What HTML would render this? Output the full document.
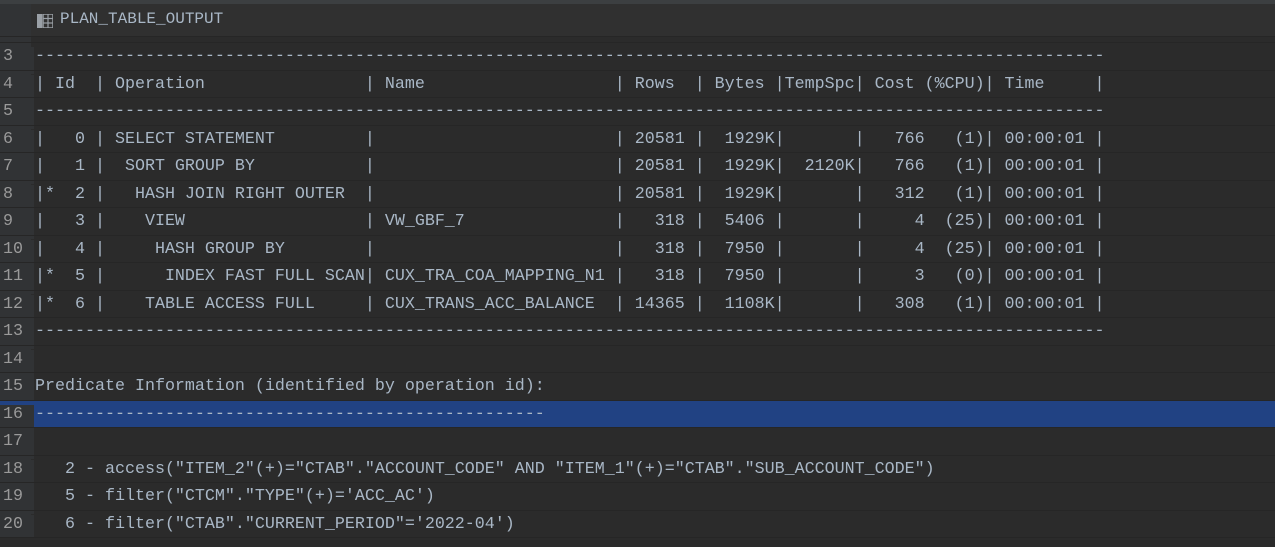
<!DOCTYPE html>
<html><head><meta charset="utf-8"><style>
html,body{margin:0;padding:0;background:#2b2b2b;width:1275px;height:547px;overflow:hidden}
body{position:relative;font-family:"Liberation Mono","DejaVu Sans Mono",monospace;font-size:16.67px;color:#a9b7c6}
.top{position:absolute;left:0;top:0;width:1275px;height:4px;background:#3c3f41}
.hdr{position:absolute;left:0;top:4px;width:1275px;height:32px;background:#303030;border-bottom:1px solid #262626}
.hdr .g{position:absolute;left:0;top:0;width:31px;height:32px;background:#313335}
.hdr .t{position:absolute;left:60px;top:6px;font-family:"Liberation Mono",monospace;font-size:16px;color:#a9b7c6}
.gut{position:absolute;left:0;top:37px;width:31px;height:510px;background:#313335}
.row{position:absolute;left:0;width:1275px;height:26.5px;border-top:1px solid #262626}
.row .n{position:absolute;left:0;width:31px;text-align:left;padding-left:3px;top:4px;color:#9a9a9a;background:#313335;height:27px}
.row pre{position:absolute;left:35px;top:4px;margin:0;font:inherit;white-space:pre;line-height:19px}
.sel{background:#214283}
.bot{position:absolute;left:0;top:537px;width:1275px;height:10px;background:#2b2b2b;border-top:1px solid #262626}
</style></head><body>
<div class="top"></div>
<div class="hdr"><div class="g"></div>
<svg style="position:absolute;left:37px;top:10px" width="16" height="14" viewBox="0 0 16 14"><rect x="0" y="0" width="5" height="14" fill="#9aa0a6"/><rect x="6" y="0" width="10" height="14" fill="none" stroke="#9aa0a6" stroke-width="1.5"/><line x1="6" y1="4.5" x2="16" y2="4.5" stroke="#9aa0a6" stroke-width="1.2"/><line x1="6" y1="9" x2="16" y2="9" stroke="#9aa0a6" stroke-width="1.2"/><line x1="11" y1="0" x2="11" y2="14" stroke="#9aa0a6" stroke-width="1.2"/></svg>
<div class="t">PLAN_TABLE_OUTPUT</div></div>
<div class="gut"></div>

<div class="row" style="top:42px"><div class="n">3</div><pre>-----------------------------------------------------------------------------------------------------------</pre></div>
<div class="row" style="top:69.5px"><div class="n">4</div><pre>| Id  | Operation                | Name                   | Rows  | Bytes |TempSpc| Cost (%CPU)| Time     |</pre></div>
<div class="row" style="top:97px"><div class="n">5</div><pre>-----------------------------------------------------------------------------------------------------------</pre></div>
<div class="row" style="top:124.5px"><div class="n">6</div><pre>|   0 | SELECT STATEMENT         |                        | 20581 |  1929K|       |   766   (1)| 00:00:01 |</pre></div>
<div class="row" style="top:152px"><div class="n">7</div><pre>|   1 |  SORT GROUP BY           |                        | 20581 |  1929K|  2120K|   766   (1)| 00:00:01 |</pre></div>
<div class="row" style="top:179.5px"><div class="n">8</div><pre>|*  2 |   HASH JOIN RIGHT OUTER  |                        | 20581 |  1929K|       |   312   (1)| 00:00:01 |</pre></div>
<div class="row" style="top:207px"><div class="n">9</div><pre>|   3 |    VIEW                  | VW_GBF_7               |   318 |  5406 |       |     4  (25)| 00:00:01 |</pre></div>
<div class="row" style="top:234.5px"><div class="n">10</div><pre>|   4 |     HASH GROUP BY        |                        |   318 |  7950 |       |     4  (25)| 00:00:01 |</pre></div>
<div class="row" style="top:262px"><div class="n">11</div><pre>|*  5 |      INDEX FAST FULL SCAN| CUX_TRA_COA_MAPPING_N1 |   318 |  7950 |       |     3   (0)| 00:00:01 |</pre></div>
<div class="row" style="top:289.5px"><div class="n">12</div><pre>|*  6 |    TABLE ACCESS FULL     | CUX_TRANS_ACC_BALANCE  | 14365 |  1108K|       |   308   (1)| 00:00:01 |</pre></div>
<div class="row" style="top:317px"><div class="n">13</div><pre>-----------------------------------------------------------------------------------------------------------</pre></div>
<div class="row" style="top:344.5px"><div class="n">14</div><pre></pre></div>
<div class="row" style="top:372px"><div class="n">15</div><pre>Predicate Information (identified by operation id):</pre></div>
<div class="row sel" style="top:399.5px"><div class="n">16</div><pre>---------------------------------------------------</pre></div>
<div class="row" style="top:427px"><div class="n">17</div><pre></pre></div>
<div class="row" style="top:454.5px"><div class="n">18</div><pre>   2 - access("ITEM_2"(+)="CTAB"."ACCOUNT_CODE" AND "ITEM_1"(+)="CTAB"."SUB_ACCOUNT_CODE")</pre></div>
<div class="row" style="top:482px"><div class="n">19</div><pre>   5 - filter("CTCM"."TYPE"(+)='ACC_AC')</pre></div>
<div class="row" style="top:509.5px"><div class="n">20</div><pre>   6 - filter("CTAB"."CURRENT_PERIOD"='2022-04')</pre></div>
<div class="bot"></div>
</body></html>
